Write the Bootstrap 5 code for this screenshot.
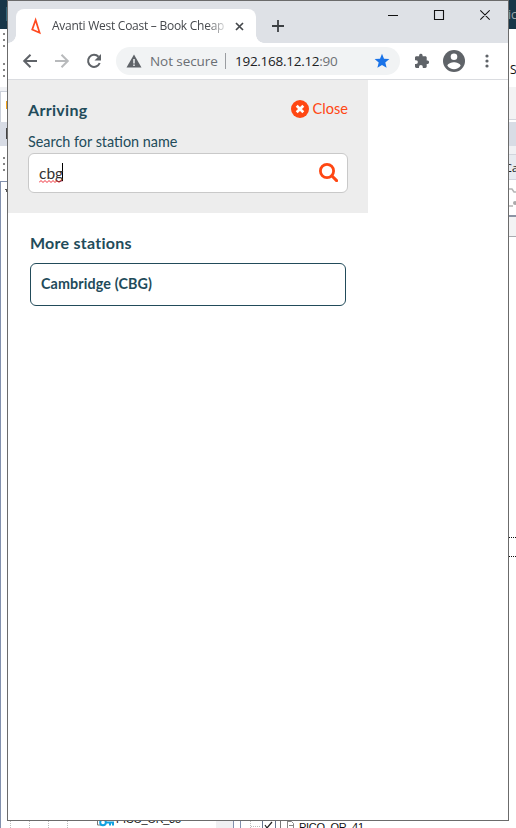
<!DOCTYPE html>
<html lang="en">
<head>
<meta charset="utf-8">
<meta name="viewport" content="width=device-width, initial-scale=1">
<title>Avanti West Coast – Book Cheap</title>
<link href="https://cdn.jsdelivr.net/npm/bootstrap@5.3.0/dist/css/bootstrap.min.css" rel="stylesheet">
<style>
:root{--teal:#224b5a;--orange:#ff4713;--chrome:#6b6f74}
body{width:516px;height:828px;background:#fff;font-family:Lato,"Open Sans",sans-serif}
svg{display:block;flex:none}
.desktop{display:grid;grid-template-columns:7px 502px 7px;grid-template-rows:821px 7px;width:516px;height:828px}
.desktop>.below{grid-column:1/4}
.browser{border:1px solid #6b6b6b;height:821px}
.titlebar{height:42px;background:#dee1e6;padding:8px 0 0 8px}
.tab{width:240px;height:34px;border-radius:8px 8px 0 0;background:#fff;padding-left:13px;position:relative}
.tab::before,.tab::after{content:"";position:absolute;bottom:0;width:8px;height:8px}
.tab::before{left:-8px;background:radial-gradient(circle at 0 0,transparent 7.5px,#fff 8px)}
.tab::after{right:-8px;background:radial-gradient(circle at 100% 0,transparent 7.5px,#fff 8px)}
.chrome-text{font-family:"Open Sans","Noto Sans",sans-serif;white-space:nowrap}
.tab-title{font-size:12px;line-height:16px;letter-spacing:-.26px;color:#45484c;width:174px;margin-left:9px;overflow:hidden;-webkit-mask-image:linear-gradient(90deg,#000 155px,transparent 177px);mask-image:linear-gradient(90deg,#000 155px,transparent 177px)}
.toolbar{height:37px;border-bottom:1px solid #dadce0}
.address{width:284px;height:28px;background:#f1f3f4;margin-left:14px;padding-left:10px;font-size:13.5px}
.unsafe{color:var(--chrome);margin-left:8px;width:67px;letter-spacing:-.07px}
.divider{width:1px;height:16px;background:#9a9da1;margin:0 9px 0 8px}
.url{color:#202124;width:104px;letter-spacing:-.27px}
.url span{color:#6d7175}
.search-panel{width:360px;height:133px;background:#ededed;padding:18px 20px 0;color:var(--teal)}
.panel-title{font-size:16px;line-height:24px;letter-spacing:.3px}
.close-link{color:var(--orange);font-size:14.6px;line-height:22px;height:22px}
.search-label{font-size:14.4px;line-height:20px;margin-top:10px}
.search-field{height:40px;border:1px solid #c9c9c9;border-radius:6px;padding:0 9px 2px 10px;margin-top:1px}
.query{font-size:15.5px;line-height:20px;color:#333;border-right:1px solid #000;width:24px;height:18px}
.results{width:360px;padding:18px 22px 0;color:var(--teal)}
.results h2{font-size:16px;line-height:24px;letter-spacing:.25px}
.station{height:43px;border:1px solid var(--teal);border-radius:6px;padding:0 10px 1px;font-size:14.3px;letter-spacing:.13px;margin-top:8px}
</style>
<script src="https://cdn.jsdelivr.net/npm/bootstrap@5.3.0/dist/js/bootstrap.bundle.min.js"></script>
</head>
<body class="overflow-hidden m-0">
<div class="desktop">
  <svg width="7" height="821" aria-hidden="true">
    <path fill="#183648" d="M0 0h7v29H0z"/><path fill="#326578" d="M6 7h1v14H6z"/>
    <g stroke="#858585" stroke-width="2" stroke-dasharray="2 4"><path d="M4 33v14M4 63v14M4 157v14"/></g>
    <path fill="#f0f1f4" d="M0 87h7v5H0z"/><path fill="#cbd0da" d="M0 91h7v1H0zM0 91h1v31H0z"/><path fill="#f2a41b" d="M6 101h1v8H6z"/>
    <path fill="#d8dce5" d="M0 122h7v24H0z"/><path fill="#444" d="M6 128h1v11H6z"/>
    <path fill="#8290ad" d="M0 181h7v1H0zM0 181h1v640H0z"/><path fill="#555" d="M5 189h2v1H5zM6 190h1v2H6z"/>
  </svg>
  <main class="browser d-flex flex-column bg-white">
    <header class="titlebar d-flex">
      <div class="tab d-flex align-items-center chrome-text">
        <svg width="14" height="18" viewBox="0 0 14 18"><path d="M6.6 3 3.2 12.600l7.400 3.200z" fill="none" stroke="#ff4a20" stroke-width="1.700"/></svg>
        <div class="tab-title">Avanti West Coast – Book Cheap</div>
        <svg width="9" height="9" viewBox="0 0 9 9" style="margin-left:9px"><path d="m1 1 7 7m0-7L1 8" stroke="#45484c" stroke-width="1.7"/></svg>
      </div>
      <svg width="12" height="12" viewBox="0 0 12 12" style="margin:11px 0 0 16px"><path d="M6 0v12M0 6h12" stroke="#3c4043" stroke-width="1.8"/></svg>
      <svg width="102" height="12" viewBox="0 0 102 12" style="margin-left:104px"><path d="M0 6.5h10M46.5 1.5h9v9h-9zM92.3 1.3l9.4 9.4m0-9.4-9.4 9.4" fill="none" stroke="#111" stroke-width="1.1"/></svg>
    </header>
    <div class="toolbar d-flex align-items-center chrome-text">
      <svg width="80" height="16" viewBox="0 0 80 16" fill="none" style="margin-left:14px"><path d="M15 8H2m6.5-6.3L2.2 8l6.3 6.3" stroke="#5f6368" stroke-width="2"/><path d="M33 8h13m-6.5-6.3L45.8 8l-6.3 6.3" stroke="#b8babc" stroke-width="2"/><path d="M76.5 3.8A6 6 0 1 0 77.7 10" stroke="#5f6368" stroke-width="2"/><path d="M79 1v6.5h-6.5z" fill="#5f6368"/></svg>
      <div class="address rounded-pill d-flex align-items-center">
        <svg width="16" height="14" viewBox="0 0 16 14"><path d="M8 .5 15.5 13.5H.5z" fill="#5f6368"/><path d="M8 5v4.5M8 10.5V12" stroke="#f1f3f4" stroke-width="1.5"/></svg>
        <div class="unsafe">Not secure</div><div class="divider"></div><div class="url">192.168.12.12<span>:90</span></div>
        <svg width="16" height="16" viewBox="0 0 16 16" style="margin-left:35px"><path fill="#1a73e8" d="m8 .7 2 5 5.4.4-4.1 3.5 1.3 5.2L8 12l-4.6 2.8 1.3-5.2L.6 6.1 6 5.7z"/></svg>
      </div>
      <svg width="16" height="16" viewBox="0 0 16 16" style="margin-left:14px"><path fill="#5f6368" d="M13.7 7.4h-1V4.6c0-.8-.6-1.4-1.4-1.4H8.600v-1a1.800 1.800 0 0 0-3.500 0v1H2.400C1.600 3.200 1 3.800 1 4.600v2.600h1a1.900 1.900 0 0 1 0 3.800H1v2.600c0 .8.6 1.400 1.400 1.400H5v-1a1.900 1.900 0 0 1 3.800 0v1h2.500c.8 0 1.400-.6 1.400-1.400v-2.700h1a1.800 1.800 0 0 0 0-3.500z"/></svg>
      <svg width="22" height="22" viewBox="0 0 22 22" style="margin-left:13px"><circle cx="11" cy="11" r="11" fill="#5f6368"/><circle cx="11" cy="6.8" r="3.3" fill="#fff"/><path d="M4.4 15.8c0-2.3 4.4-3.5 6.6-3.5s6.6 1.2 6.6 3.5a8 8 0 0 1-13.2 0z" fill="#fff"/></svg>
      <svg width="4" height="14" viewBox="0 0 4 14" fill="#5f6368" style="margin-left:19.500px"><circle cx="2" cy="2" r="1.6"/><circle cx="2" cy="7" r="1.6"/><circle cx="2" cy="12" r="1.6"/></svg>
    </div>
    <section class="search-panel">
      <div class="d-flex justify-content-between">
        <h1 class="panel-title fw-bold m-0">Arriving</h1>
        <a class="close-link d-flex align-items-center text-decoration-none" href="#"><svg width="18" height="18" viewBox="0 0 18 18" class="me-1"><circle cx="9" cy="9" r="9" fill="#ff4713"/><path d="m5.7 5.7 6.600 6.600m0-6.600-6.600 6.600" stroke="#fff" stroke-width="2.700"/></svg>Close</a>
      </div>
      <div class="search-label">Search for station name</div>
      <div class="search-field bg-white d-flex align-items-center justify-content-between">
        <div class="query">cbg
          <svg width="24" height="3" viewBox="0 0 24 3" style="margin-top:-3px"><path d="m0 2.5 2-2 2 2 2-2 2 2 2-2 2 2 2-2 2 2 2-2 2 2 2-2 1 1" fill="none" stroke="#ee2b35"/></svg>
        </div>
        <svg width="19" height="19" viewBox="0 0 19 19"><circle cx="8" cy="8" r="6.6" fill="none" stroke="#ff4713" stroke-width="2.8"/><path d="m12.8 12.8 4.8 4.8" stroke="#ff4713" stroke-width="3" stroke-linecap="round"/></svg>
      </div>
    </section>
    <section class="results">
      <h2 class="fw-bold m-0">More stations</h2>
      <div class="station d-flex align-items-center fw-bold">Cambridge (CBG)</div>
    </section>
  </main>
  <svg width="7" height="821" font-family="Open Sans,sans-serif" aria-hidden="true">
    <path fill="#183648" d="M0 0h7v29H0z"/><text x="-1" y="19" font-size="12" fill="#a0a8ae">ic</text>
    <text x="1" y="74" font-size="12" fill="#111">S</text>
    <path fill="#f3f3f4" d="M0 87h7v32H0z"/><path fill="#d3d6dc" d="M0 119h7v1H0z"/><path fill="#d8dce5" d="M0 122h7v24H0z"/><path fill="#f0f1f4" d="M0 146h7v8H0z"/><path fill="#d1d5dd" d="M0 154h7v1H0zM0 179h7v1H0z"/><path fill="#e7ebf0" d="M0 155h7v24H0z"/>
    <text x="-4" y="172" font-size="11" fill="#111">Ca</text>
    <path d="M0 189h3l2 3h2M0 206h4" fill="none" stroke="#b5b5b5" stroke-width="1.5"/><circle cx="6" cy="203" r="2" fill="#aaa"/>
    <path fill="#8c94a4" d="M0 215h7v2H0z"/><path fill="#f3f3f4" d="M0 217h7v19H0z"/><path fill="#a9abb0" d="M0 236h7v1H0z"/>
    <path d="M0 537.5h7M0 556.5h7" stroke="#111" stroke-dasharray="1 1"/>
  </svg>
  <svg class="below" width="516" height="7" font-family="Liberation Sans,sans-serif" font-size="11" fill="#111" aria-hidden="true">
    <path fill="#8290ad" d="M0 0h1v7H0zM233 0h1v7h-1zM240 0h1v7h-1z"/><path fill="#f0f0f2" d="M216 0h17v7h-17z"/>
    <path d="M10.5 0v7M29.5 0v7M48.5 0v7M67.5 0v7M250.5 0v7M251 5.5h10" stroke="#bbb" stroke-dasharray="1 1"/>
    <path d="M97.5 0v4h4" fill="none" stroke="#777"/><circle cx="103" cy="1.5" r="2.8" fill="none" stroke="#11a1e0" stroke-width="2"/><path d="M105 1.5h8v3m-3-3v3" fill="none" stroke="#11a1e0" stroke-width="2"/>
    <text x="116" y="2" textLength="65">PICO_OR_35</text>
    <path d="M262.5 0v7M275.5 0v7" stroke="#66748d"/><path d="m265 4 2 3 5-6" fill="none" stroke="#222" stroke-width="1.2"/>
    <path d="M280.5 0v7" stroke="#777"/><path d="M287.5 0v7M287.5.5h4l2 2v5M289 4.5h4" fill="none" stroke="#888"/>
    <text x="299" y="10" textLength="65">PICO_OR_41</text>
  </svg>
</div>
</body>
</html>
